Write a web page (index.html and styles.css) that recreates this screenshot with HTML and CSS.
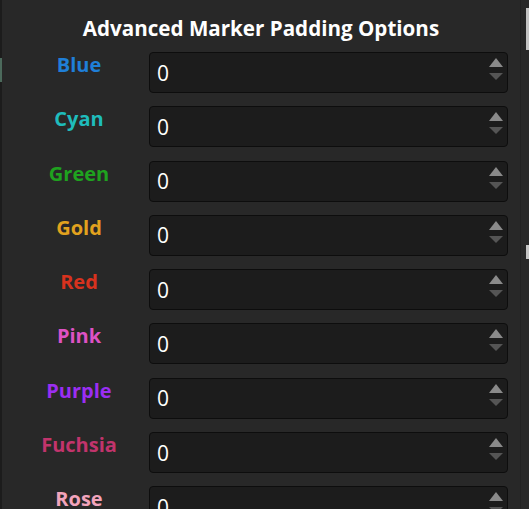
FILE: index.html
```html
<!DOCTYPE html>
<html lang="en">
<head>
  <meta charset="UTF-8">
  <meta name="viewport" content="width=device-width, initial-scale=1.0">
  <title>Advanced Marker Padding Options</title>
  <link rel="stylesheet" href="styles.css">
</head>
<body>
  <div class="edge-left">
    <div class="edge-mark"></div>
  </div>
  <div class="panel">
    <h1>Advanced Marker Padding Options</h1>
    <div class="options">
      <label class="blue">Blue</label>
      <div class="field"><span class="value">0</span><svg class="spin" width="16" height="39" viewBox="0 0 16 39"><path d="M1 14 L8 5 L15 14 Z" fill="#8a8a8a"/><path d="M1 20 L15 20 L8 27 Z" fill="#555"/></svg></div>

      <label class="cyan">Cyan</label>
      <div class="field"><span class="value">0</span><svg class="spin" width="16" height="39" viewBox="0 0 16 39"><path d="M1 14 L8 5 L15 14 Z" fill="#8a8a8a"/><path d="M1 20 L15 20 L8 27 Z" fill="#555"/></svg></div>

      <label class="green">Green</label>
      <div class="field"><span class="value">0</span><svg class="spin" width="16" height="39" viewBox="0 0 16 39"><path d="M1 14 L8 5 L15 14 Z" fill="#8a8a8a"/><path d="M1 20 L15 20 L8 27 Z" fill="#555"/></svg></div>

      <label class="gold">Gold</label>
      <div class="field"><span class="value">0</span><svg class="spin" width="16" height="39" viewBox="0 0 16 39"><path d="M1 14 L8 5 L15 14 Z" fill="#8a8a8a"/><path d="M1 20 L15 20 L8 27 Z" fill="#555"/></svg></div>

      <label class="red">Red</label>
      <div class="field"><span class="value">0</span><svg class="spin" width="16" height="39" viewBox="0 0 16 39"><path d="M1 14 L8 5 L15 14 Z" fill="#8a8a8a"/><path d="M1 20 L15 20 L8 27 Z" fill="#555"/></svg></div>

      <label class="pink">Pink</label>
      <div class="field"><span class="value">0</span><svg class="spin" width="16" height="39" viewBox="0 0 16 39"><path d="M1 14 L8 5 L15 14 Z" fill="#8a8a8a"/><path d="M1 20 L15 20 L8 27 Z" fill="#555"/></svg></div>

      <label class="purple">Purple</label>
      <div class="field"><span class="value">0</span><svg class="spin" width="16" height="39" viewBox="0 0 16 39"><path d="M1 14 L8 5 L15 14 Z" fill="#8a8a8a"/><path d="M1 20 L15 20 L8 27 Z" fill="#555"/></svg></div>

      <label class="fuchsia">Fuchsia</label>
      <div class="field"><span class="value">0</span><svg class="spin" width="16" height="39" viewBox="0 0 16 39"><path d="M1 14 L8 5 L15 14 Z" fill="#8a8a8a"/><path d="M1 20 L15 20 L8 27 Z" fill="#555"/></svg></div>

      <label class="rose">Rose</label>
      <div class="field"><span class="value">0</span><svg class="spin" width="16" height="39" viewBox="0 0 16 39"><path d="M1 14 L8 5 L15 14 Z" fill="#8a8a8a"/><path d="M1 20 L15 20 L8 27 Z" fill="#555"/></svg></div>
    </div>
  </div>
  <div class="gutter">
    <div class="thumb"></div>
    <div class="thumb thumb-low"></div>
  </div>
</body>
</html>
```

FILE: styles.css
```css
html, body {
  height: 100%;
}
body {
  margin: 0;
  background-color: #282828;
  font-family: "Open Sans", "Noto Sans", sans-serif;
  display: flex;
  overflow: hidden;
}
.edge-left {
  width: 2px;
  background-color: #1c1c1c;
  flex-shrink: 0;
}
.edge-mark {
  height: 24px;
  margin-top: 58px;
  background-color: #4c6a5c;
}
.panel {
  flex: 1;
  border-right: 1px solid #222;
}
h1 {
  margin: 0;
  padding-top: 14px;
  font-size: 20.6px;
  line-height: 28px;
  font-weight: 700;
  color: #fff;
  text-align: center;
}
.options {
  display: grid;
  grid-template-columns: 130px 359px;
  grid-auto-rows: 41px;
  column-gap: 5px;
  row-gap: 13.3px;
  margin-top: 10px;
  padding-left: 12px;
}
label {
  font-size: 20px;
  line-height: 24px;
  font-weight: 700;
  text-align: center;
  padding-top: 1px;
}
.field {
  display: flex;
  align-items: center;
  background-color: #1c1c1c;
  border: 1px solid #0d0d0d;
  border-radius: 4px;
  padding-left: 7px;
}
.value {
  flex: 1;
  color: #fff;
  font-size: 21px;
}
.spin {
  align-self: flex-start;
  margin-right: 3px;
}
.gutter {
  width: 8px;
  flex-shrink: 0;
  display: flex;
  flex-direction: column;
  align-items: flex-end;
}
.thumb {
  width: 3px;
  height: 42px;
  margin-top: 8px;
  background-color: #c4c4c4;
}
.thumb-low {
  height: 14px;
  margin-top: 195px;
}

.blue { color: #1f7fd8; }
.cyan { color: #1fbcbc; }
.green { color: #1fa21f; }
.gold { color: #e2a21e; }
.red { color: #d8321e; }
.pink { color: #de52c4; }
.purple { color: #9a2ef2; }
.fuchsia { color: #c2346c; }
.rose { color: #f2a4bc; }
```
